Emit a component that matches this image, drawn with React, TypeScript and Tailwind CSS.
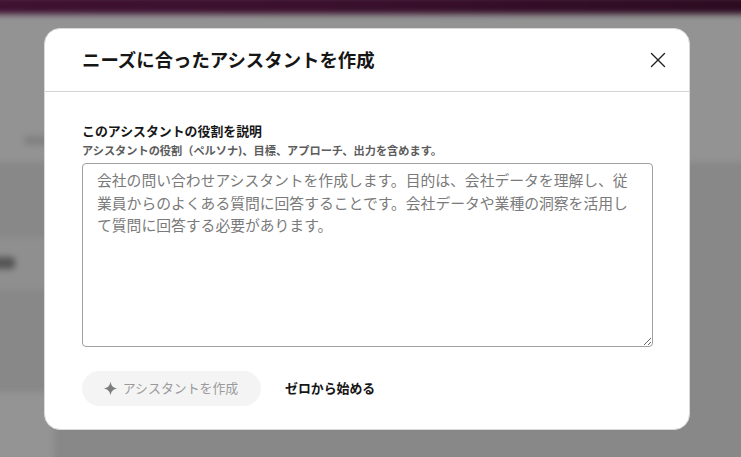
import React from 'react';
import { X } from 'lucide-react';

const jp = 'font-["Inter","Noto_Sans_CJK_JP",sans-serif]';

export default function App() {
  return (
    <div className={`relative h-[457px] w-[741px] overflow-hidden bg-[#888888] ${jp}`}>
      {/* blurred page behind the dialog */}
      <div className="absolute -inset-x-2 inset-y-0 blur-[3px]">
        <div className="absolute left-0 top-[12px] h-[150px] w-full bg-[#939393]" />
        <div className="absolute left-0 top-[237px] h-[53px] w-[60px] bg-[#8f8f8f]" />
        <div className="absolute left-0 top-[257px] h-[12px] w-[23px] rounded bg-[#555555]" />
        <div className="absolute left-[32px] top-[136px] h-[9px] w-[30px] rounded bg-[#808080]" />
        <div className="absolute left-0 top-[392px] h-[70px] w-[62px] bg-[#949494]" />
        <div className="absolute -top-[4px] left-0 h-[18px] w-full bg-gradient-to-r from-[#3f1132] via-[#390f2c] to-[#2c0b21]" />
      </div>

      {/* dialog */}
      <div className="absolute left-[44px] top-[28px] flex h-[402px] w-[646px] flex-col rounded-[16px] border border-[#d9d9d9] bg-white">
        <div className="flex h-[63px] items-center justify-between border-b border-[#d4d4d4] pl-[37px] pr-[18px]">
          <h2 className="pt-[2px] text-[18.4px] font-semibold text-[#161616]">ニーズに合ったアシスタントを作成</h2>
          <X className="h-[26px] w-[26px] text-[#222222]" strokeWidth={1.25} />
        </div>
        <div className="flex flex-1 flex-col px-[37px] pt-[31px]">
          <label className="text-[12.9px] font-bold leading-[18px] text-[#161616]">このアシスタントの役割を説明</label>
          <p className="mt-[2px] text-[11.2px] font-semibold leading-[16px] text-[#5c5c5c]">アシスタントの役割（ペルソナ)、目標、アプローチ、出力を含めます。</p>
          <textarea
            className="mt-[4px] h-[184px] w-[571px] rounded-[4px] border border-[#a0a0a0] bg-white py-[6px] pl-[14px] pr-[15px] text-[14.8px] leading-[22.5px] text-[#7a7a7a] outline-none"
            readOnly
            value="会社の問い合わせアシスタントを作成します。目的は、会社データを理解し、従業員からのよくある質問に回答することです。会社データや業種の洞察を活用して質問に回答する必要があります。"
          />
          <div className="mt-[24px] flex items-center gap-[24px]">
            <button type="button" className="flex h-[35px] w-[179px] items-center justify-center gap-[5px] rounded-full bg-[#f4f4f4] pr-[2px] text-[12.9px] text-[#9a9a9a]">
              <svg viewBox="0 0 16 16" className="h-[15px] w-[15px] fill-[#7d7d7d]">
                <path d="M8 0.5 C8.6 5 11 7.4 15.5 8 C11 8.6 8.6 11 8 15.5 C7.4 11 5 8.6 0.5 8 C5 7.4 7.4 5 8 0.5 Z" />
              </svg>
              アシスタントを作成
            </button>
            <button type="button" className="text-[12.9px] font-bold text-[#161616]">ゼロから始める</button>
          </div>
        </div>
      </div>
    </div>
  );
}
